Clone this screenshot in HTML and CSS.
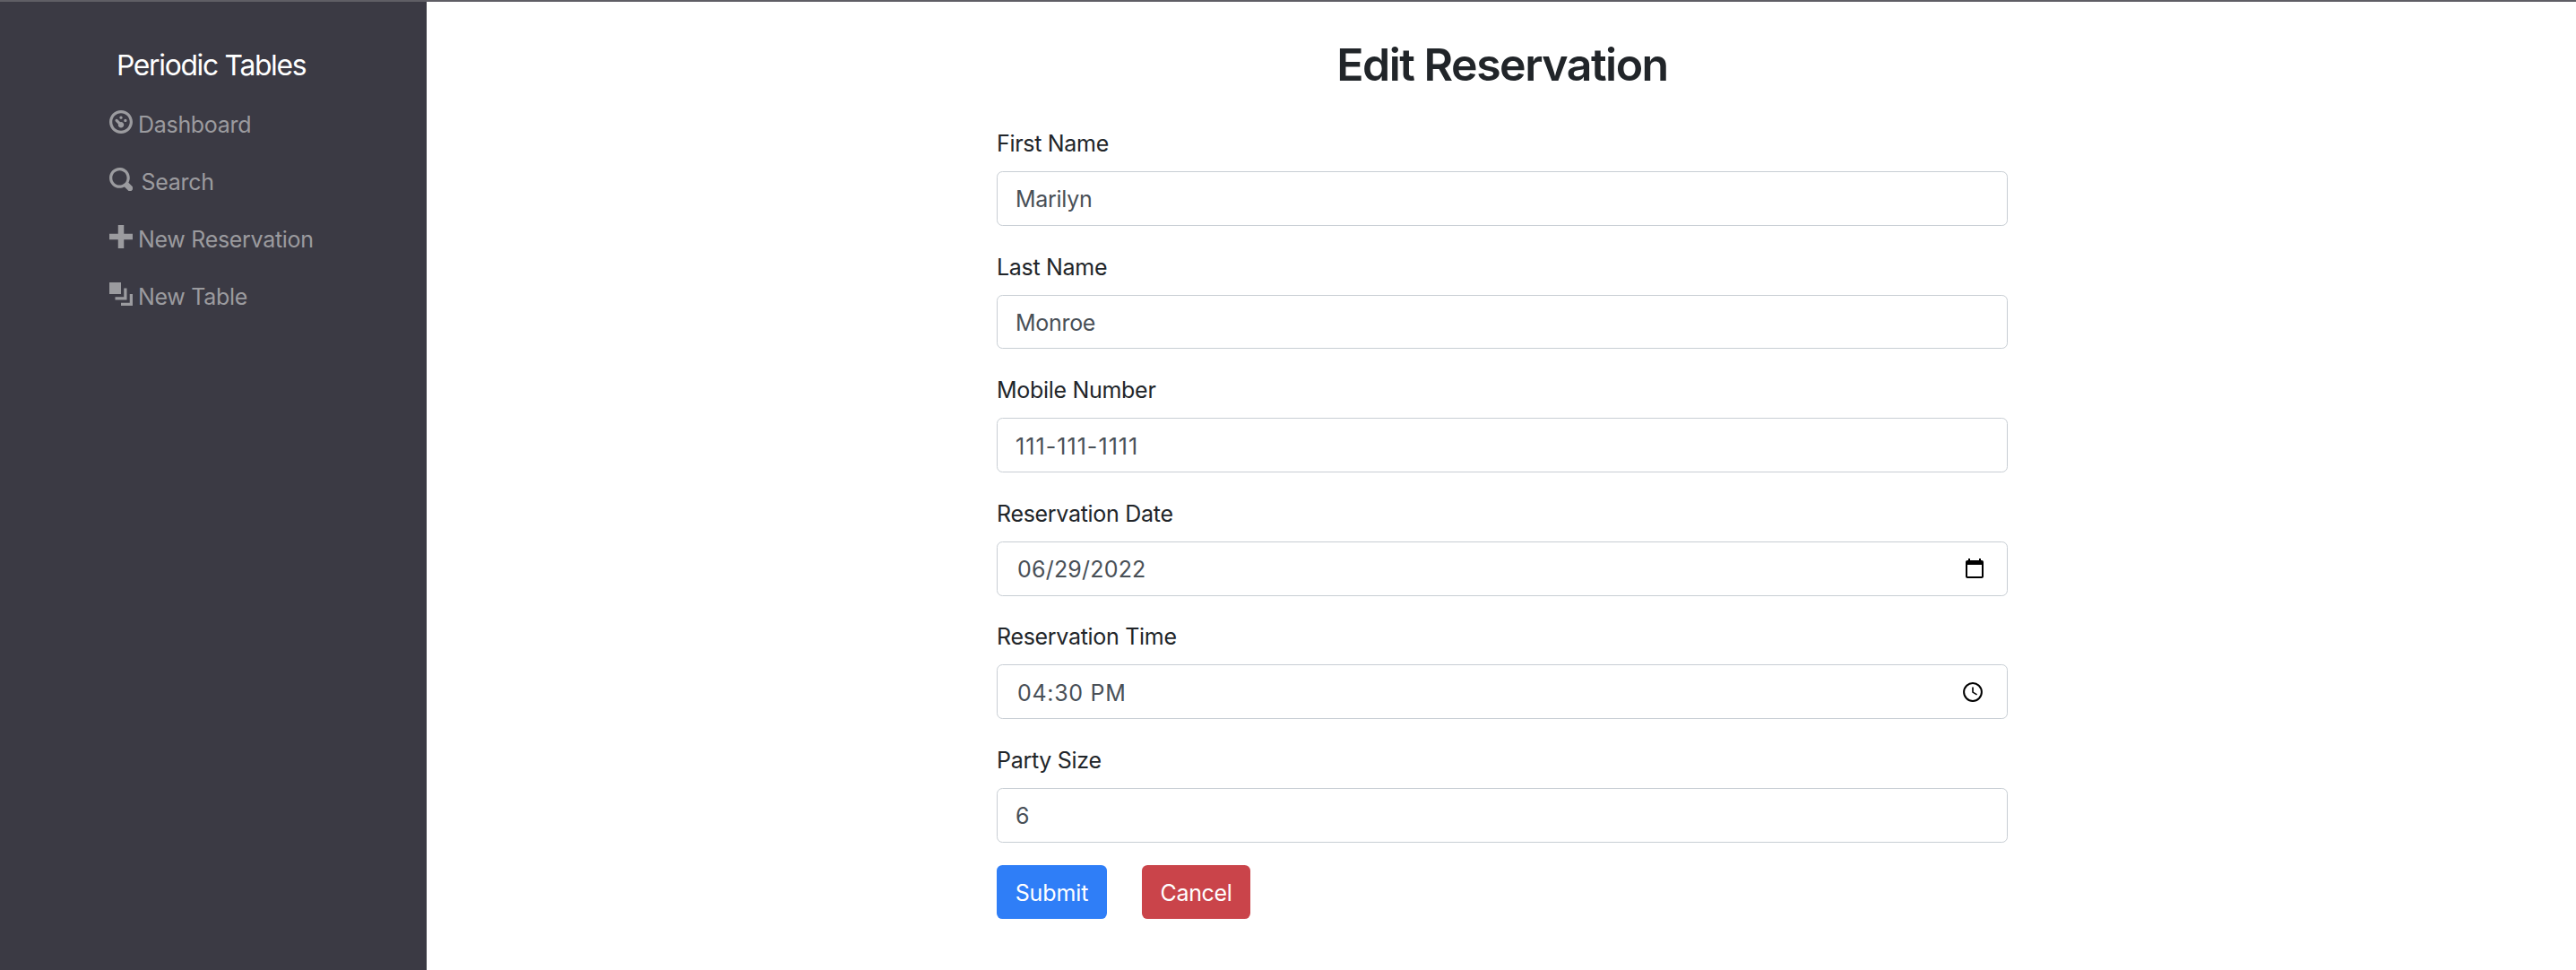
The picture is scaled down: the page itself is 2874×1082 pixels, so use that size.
FILE: index.html
```html
<!DOCTYPE html>
<html lang="en">
<head>
<meta charset="utf-8">
<title>Periodic Tables</title>
<link rel="stylesheet" href="styles.css">
</head>
<body>
<div class="layout">
  <nav class="sidebar">
    <a class="brand">Periodic Tables</a>
    <ul class="nav">
      <li class="nav-item">
        <svg class="icon" viewBox="0 0 8 8"><path d="M4 0c-2.2 0-4 1.8-4 4s1.8 4 4 4 4-1.8 4-4-1.8-4-4-4zm0 1c1.66 0 3 1.34 3 3s-1.34 3-3 3-3-1.34-3-3 1.34-3 3-3zm0 1c-.28 0-.5.22-.5.5s.22.5.5.5.5-.22.5-.5-.22-.5-.5-.5zm-1.66 1a.5.5 0 0 0-.19.84l.91.91c-.02.08-.06.16-.06.25 0 .55.45 1 1 1s1-.45 1-1-.45-1-1-1c-.09 0-.17.04-.25.06l-.91-.91a.5.5 0 0 0-.44-.16.5.5 0 0 0-.06 0zm3.16 0c-.28 0-.5.22-.5.5s.22.5.5.5.5-.22.5-.5-.22-.5-.5-.5z"/></svg>
        <span>Dashboard</span>
      </li>
      <li class="nav-item nav-item-wide">
        <svg class="icon" viewBox="0 0 8 8"><path d="M3.5 0c-1.93 0-3.5 1.57-3.5 3.5s1.57 3.5 3.5 3.5c.59 0 1.17-.14 1.66-.41a1 1 0 0 0 .13.13l1 1a1.02 1.02 0 1 0 1.44-1.44l-1-1a1 1 0 0 0-.16-.13c.27-.49.44-1.06.44-1.66 0-1.93-1.55-3.5-3.5-3.5zm.02 1c1.39 0 2.5 1.11 2.5 2.5 0 .66-.24 1.27-.66 1.72-.01.01-.02.02-.03.03a1 1 0 0 0-.13.13c-.44.4-1.04.63-1.69.63-1.39 0-2.5-1.11-2.5-2.5s1.11-2.5 2.5-2.5z"/></svg>
        <span>Search</span>
      </li>
      <li class="nav-item">
        <svg class="icon" viewBox="0 0 8 8"><path d="M3 0v3h-3v2h3v3h2v-3h3v-2h-3v-3h-2z"/></svg>
        <span>New Reservation</span>
      </li>
      <li class="nav-item">
        <svg class="icon" viewBox="0 0 8 8"><path d="M0 0v4h4v-4h-4zm5 2v3h-3v1h4v-4h-1zm2 2v3h-3v1h4v-4h-1z"/></svg>
        <span>New Table</span>
      </li>
    </ul>
  </nav>
  <main class="content">
    <h1 class="title">Edit Reservation</h1>
    <form class="form">
      <div class="group">
        <label for="first">First Name</label>
        <div class="control"><input id="first" type="text" value="Marilyn"></div>
      </div>
      <div class="group">
        <label for="last">Last Name</label>
        <div class="control"><input id="last" type="text" value="Monroe"></div>
      </div>
      <div class="group">
        <label for="mobile">Mobile Number</label>
        <div class="control phone"><input id="mobile" type="text" value="111-111-1111"></div>
      </div>
      <div class="group">
        <label for="date">Reservation Date</label>
        <div class="control date"><input id="date" type="text" value="06/29/2022">
          <svg class="picker" viewBox="0 0 24 24"><path d="M20 3h-1V1h-2v2H7V1H5v2H4c-1.1 0-2 .9-2 2v16c0 1.1.9 2 2 2h16c1.1 0 2-.9 2-2V5c0-1.1-.9-2-2-2zm0 18H4V8h16v13z"/></svg>
        </div>
      </div>
      <div class="group">
        <label for="time">Reservation Time</label>
        <div class="control time"><input id="time" type="text" value="04:30 PM">
          <svg class="picker" viewBox="0 0 24 24"><circle cx="12" cy="12" r="9.9" fill="none" stroke="#000" stroke-width="2"/><path d="M11.2 6.5v6.1l5 3 .8-1.3-4.2-2.500V6.5z"/></svg>
        </div>
      </div>
      <div class="group">
        <label for="size">Party Size</label>
        <div class="control"><input id="size" type="text" value="6"></div>
      </div>
      <div class="actions">
        <button class="btn submit" type="button">Submit</button>
        <button class="btn cancel" type="button">Cancel</button>
      </div>
    </form>
  </main>
</div>
</body>
</html>
```
FILE: styles.css
```css
* { box-sizing: border-box; }

body {
  margin: 0;
  background: #fff;
  color: #212529;
  font: 400 25px/38.4px Inter, "Liberation Sans", sans-serif;
  letter-spacing: -0.3px;
}

.layout {
  display: flex;
  height: 1082px;
  border-top: 2px solid #5f5e65;
}

.sidebar {
  flex: 0 0 476px;
  padding: 47px 0 0 122px;
  background: #3b3a44;
}

.brand {
  display: block;
  padding-left: 8px;
  color: #fff;
  font-size: 31.8px;
  line-height: 48px;
  letter-spacing: -1.3px;
}

.nav {
  margin: 9.6px 0 0;
  padding: 0;
  list-style: none;
}

.nav-item {
  display: flex;
  gap: 6px;
  height: 64px;
  padding-top: 13px;
  color: #9b9b9f;
  letter-spacing: -0.3px;
}

.nav-item-wide { gap: 9.6px; }

.icon {
  width: 26px;
  height: 26px;
  margin-top: 3.4px;
  fill: currentColor;
}

.content {
  flex: 1;
  display: flex;
  flex-direction: column;
  align-items: center;
  padding-top: 40px;
}

.title {
  margin: 0 0 36.5px 2px;
  font-size: 50px;
  font-weight: 600;
  line-height: 61.4px;
  letter-spacing: -1.5px;
}

.form {
  width: 1128px;
  margin-left: 2px;
}

.group { margin-bottom: 25.6px; }

.group label {
  display: block;
  padding-top: 1.2px;
  margin-bottom: 11.6px;
}

.control {
  display: flex;
  align-items: center;
  height: 60.8px;
  padding: 0 24px 0 20px;
  border: 1px solid #c8ced4;
  border-radius: 6.4px;
}

.control input {
  flex: 1;
  min-width: 0;
  padding: 2.4px 0 0;
  border: 0;
  outline: 0;
  background: none;
  color: #495057;
  font: inherit;
  letter-spacing: inherit;
}

.picker {
  width: 24px;
  height: 24px;
}

.phone { letter-spacing: 1.05px; }
.date { padding-left: 22px; letter-spacing: 0.2px; }
.time { padding-left: 22px; padding-right: 26px; letter-spacing: 0.7px; }

.actions {
  display: flex;
  gap: 39px;
}

.btn {
  height: 60px;
  padding: 2px 0 0;
  border: 0;
  border-radius: 6.4px;
  color: #fff;
  font: inherit;
  letter-spacing: -0.1px;
}

.submit { width: 123px; background: #2f7ef7; }
.cancel { width: 121px; background: #ca444a; letter-spacing: -0.35px; }
```
